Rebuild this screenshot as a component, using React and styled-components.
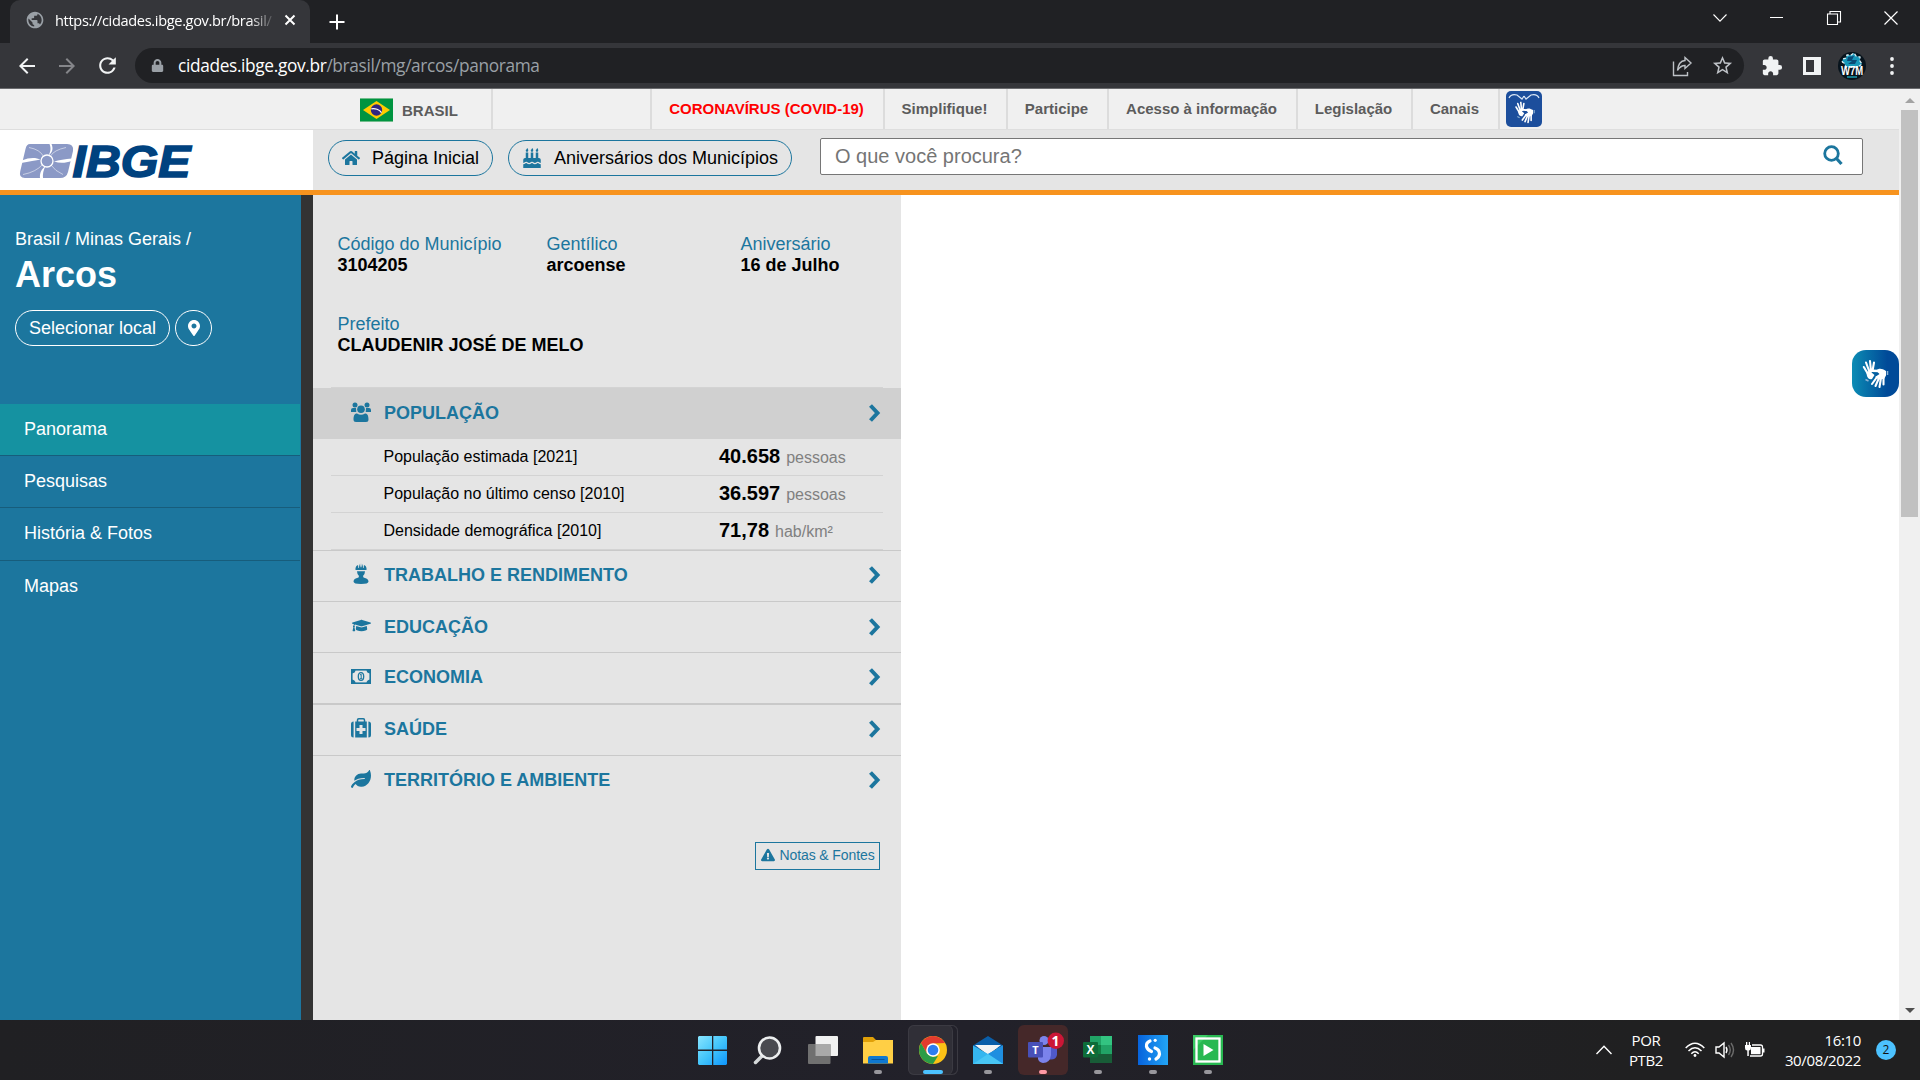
import React from "react";
import styled, { createGlobalStyle, css } from "styled-components";
import {
  FaHome,
  FaBirthdayCake,
  FaGraduationCap,
  FaLeaf,
  FaExclamationTriangle,
  FaMapMarkerAlt,
  FaLock,
} from "react-icons/fa";
import { MdExtension, MdStarBorder, MdRefresh, MdArrowBack, MdArrowForward, MdPublic } from "react-icons/md";

const Global = createGlobalStyle`
  * { box-sizing: border-box; }
  html, body { margin: 0; padding: 0; }
  body { width: 1920px; height: 1080px; overflow: hidden; background: #fff; font-family: "Liberation Sans", Arial, sans-serif; }
  svg { display: block; flex: none; overflow: visible; }
`;

const blue = "#1c769e";
const uiFont = css`font-family: "Open Sans", "Noto Sans", sans-serif;`;

const Screen = styled.div`
  width: 1920px;
  height: 1080px;
  display: flex;
  flex-direction: column;
`;

/* ---------- Browser chrome ---------- */
const TabStrip = styled.div`
  height: 43px;
  background: #202124;
  display: flex;
  justify-content: space-between;
  padding-left: 10px;
  ${uiFont}
`;
const TabGroup = styled.div`
  display: flex;
  align-items: flex-end;
`;
const Tab = styled.div`
  width: 300px;
  height: 43px;
  border-radius: 10px 10px 0 0;
  background: #35363a;
  display: flex;
  align-items: center;
  padding: 0 12px 3px 15px;
  color: #fff;
`;
const TabTitle = styled.div`
  width: 221px;
  margin: 0 8px 0 10px;
  font-size: 14.6px;
  letter-spacing: -0.35px;
  white-space: nowrap;
  mask-image: linear-gradient(90deg, #000 88%, transparent 100%);
`;
const NewTab = styled.div`
  width: 54px;
  height: 43px;
  display: grid;
  place-items: center;
`;
const WindowControls = styled.div`
  display: flex;
  height: 36px;
  padding-right: 1px;
`;
const WindowButton = styled.div`
  width: 57px;
  display: grid;
  place-items: center;
`;
const Toolbar = styled.div`
  height: 46px;
  background: #35363a;
  border-bottom: 1px solid #6a6b6e;
  display: flex;
  align-items: center;
  padding: 0 8px 0 7px;
  ${uiFont}
`;
const ToolButton = styled.div`
  width: 40px;
  height: 36px;
  display: grid;
  place-items: center;
  color: ${(p) => p.$color || "#f1f3f4"};
`;
const AddressBar = styled.div`
  width: 1609px;
  height: 35px;
  margin: 0 8px 0 8px;
  border-radius: 18px;
  background: #202124;
  display: flex;
  align-items: center;
  padding: 0 2px 0 16px;
`;
const Url = styled.div`
  flex: 1;
  margin-left: 14px;
  font-size: 17.3px;
  line-height: 24px;
  letter-spacing: -0.35px;
  white-space: nowrap;
  color: #9aa0a6;
  b { font-weight: 400; color: #fff; }
`;

/* ---------- Page ---------- */
const Viewport = styled.div`
  height: 931px;
  display: flex;
`;
const Page = styled.div`
  position: relative;
  width: 1899px;
  display: flex;
  flex-direction: column;
`;
const GovBar = styled.div`
  height: 41px;
  background: #f0f0f0;
  border-bottom: 1px solid #dedede;
  display: flex;
`;
const GovCell = styled.div`
  width: ${(p) => p.$w}px;
  padding: 0 2px 2px 0;
  border-right: 2px solid #dcdcdc;
  display: flex;
  align-items: center;
  justify-content: center;
  font-weight: 700;
  font-size: 15px;
  color: ${(p) => p.$color || "#5c5c5c"};
  white-space: nowrap;
`;
const Brand = styled(GovCell)`
  justify-content: flex-start;
  padding: 2px 0 0 360px;
  gap: 9px;
`;
const LibrasLink = styled.div`
  padding: 2px 0 0 6px;
`;
const LibrasBox = styled.div`
  width: 36px;
  height: 36px;
  border-radius: 5px;
  background: #1c4e9c;
`;
const Header = styled.header`
  height: 65px;
  border-bottom: 5px solid #f7931e;
  background: #e5e5e5;
  display: flex;
`;
const LogoArea = styled.div`
  width: 313px;
  background: #fff;
  padding: 10px 0 0 16px;
`;
const LogoText = styled.text`
  font-family: "Liberation Sans", Arial, sans-serif;
  font-weight: 700;
  font-style: italic;
  font-size: 45px;
  fill: #00427f;
  stroke: #00427f;
  stroke-width: 1.6px;
`;
const PillButton = styled.div`
  height: 36px;
  width: ${(p) => p.$w}px;
  margin: 10px 0 0 15px;
  border: 1px solid ${blue};
  border-radius: 18px;
  display: flex;
  align-items: center;
  padding-left: 13px;
  gap: 12px;
  font-size: 18px;
  color: #000;
  white-space: nowrap;
  svg { color: ${blue}; }
`;
const SearchBox = styled.div`
  width: 1043px;
  height: 37px;
  margin: 8px 0 0 28px;
  border: 1px solid #767676;
  border-radius: 2px;
  background: #fff;
  display: flex;
  align-items: center;
  justify-content: space-between;
  padding: 0 19px 0 14px;
  font-size: 20px;
  color: #757575;
  svg { margin-bottom: 2px; }
`;
const Body = styled.div`
  flex: 1;
  display: flex;
  background: #fff;
`;
const Sidebar = styled.aside`
  width: 313px;
  background: ${blue};
  border-right: 12px solid #333;
  color: #fff;
  padding-top: 34px;
`;
const Crumb = styled.div`
  padding-left: 15px;
  font-size: 18px;
  line-height: 20px;
`;
const City = styled.h1`
  margin: 6px 0 15px;
  padding-left: 15px;
  font-size: 36px;
  line-height: 40px;
  font-weight: 700;
`;
const PlaceActions = styled.div`
  display: flex;
  gap: 5px;
  padding-left: 15px;
  margin-bottom: 58px;
`;
const PlaceButton = styled.div`
  width: ${(p) => p.$w}px;
  height: 36px;
  border: 1px solid #fff;
  border-radius: 18px;
  display: grid;
  place-items: center;
  font-size: 18px;
`;
const MenuItem = styled.div`
  width: 300px;
  height: ${(p) => p.$h || 52}px;
  padding: 0 0 ${(p) => (p.$h ? 2 : 0)}px 24px;
  display: flex;
  align-items: center;
  font-size: 18px;
  background: ${(p) => (p.$active ? "#1592a1" : "transparent")};
  border-bottom: ${(p) => (p.$last ? "1px solid transparent" : "1px solid #175d7c")};
`;
const Panel = styled.section`
  width: 588px;
  background: #e5e5e5;
  padding-top: 39px;
`;
const Facts = styled.div`
  display: grid;
  grid-template-columns: 209px 194px 1fr;
  row-gap: 38px;
  padding: 0 0 31px 24.500px;
`;
const Fact = styled.div`
  grid-column: ${(p) => (p.$wide ? "1 / -1" : "auto")};
  font-size: 18px;
  line-height: 21px;
  color: ${blue};
  strong { display: block; color: #000; }
`;
const PanelRule = styled.div`
  height: 1px;
  margin: 0 18px;
  background: #d3d3d3;
`;
const SectionRow = styled.div`
  height: ${(p) => p.$h || 51}px;
  background: ${(p) => (p.$open ? "#d0d0d0" : "transparent")};
  border-top: ${(p) => (p.$open ? 0 : p.$border || 1)}px solid #c9c9c9;
  padding: 0 20px ${(p) => p.$lift || 0}px 38px;
  display: flex;
  align-items: center;
  font-size: 18px;
  font-weight: 700;
  color: ${blue};
`;
const SectionIcon = styled.div`
  width: 20px;
  height: 24px;
  margin: 0 13px 3px 0;
  display: grid;
  place-items: center;
`;
const SectionTitle = styled.div`
  flex: 1;
`;
const SectionArrow = styled.svg`
  margin-bottom: 1px;
`;
const DataRow = styled.div`
  height: 37px;
  margin: 0 18px;
  padding-left: 52.500px;
  border-bottom: 1px solid #d3d3d3;
  display: flex;
  font-size: 16px;
  line-height: 36px;
  color: #000;
`;
const DataLabel = styled.div`
  width: 335.500px;
`;
const DataValue = styled.div`
  margin-top: -1px;
  font-size: 20px;
  font-weight: 700;
  span { font-size: 16px; font-weight: 400; color: #808080; margin-left: 6px; }
`;
const NotesButton = styled.div`
  width: 125px;
  height: 28px;
  margin: 36px 0 0 442px;
  border: 1px solid ${blue};
  display: flex;
  align-items: center;
  justify-content: center;
  gap: 4px;
  padding: 0 0 2px 1px;
  font-size: 14px;
  letter-spacing: -0.1px;
  color: ${blue};
`;
const FloatingLibras = styled.div`
  position: absolute;
  right: 0;
  top: 261px;
  width: 47px;
  height: 47px;
  border-radius: 14px;
  background: linear-gradient(90deg, #0c8cb4, #004a98 75%);
`;
const Scrollbar = styled.div`
  width: 21px;
  background: #f0f0f0;
  display: flex;
  flex-direction: column;
  align-items: center;
`;
const ScrollArrow = styled.div`
  height: 21px;
  padding-top: 2px;
  display: grid;
  place-items: center;
`;
const ScrollTrack = styled.div`
  flex: 1;
`;
const ScrollThumb = styled.div`
  width: 17px;
  height: 407px;
  background: #c1c1c1;
`;

/* ---------- Taskbar ---------- */
const Taskbar = styled.footer`
  height: 60px;
  background: linear-gradient(90deg, #202023, #22212a 50%, #202021 85%);
  display: flex;
  justify-content: space-between;
  padding: 5px 24px 5px 688px;
  color: #fff;
  ${uiFont}
`;
const AppList = styled.div`
  display: flex;
  gap: 5px;
`;
const AppSlot = styled.div`
  width: 50px;
  height: 50px;
  border-radius: 6px;
  background: ${(p) => p.$bg || "transparent"};
  box-shadow: ${(p) => (p.$stacked ? "inset 0 0 0 1px #3b3a42, -5px 0 0 0 #22212a inset, -6px 0 0 0 #3b3a42 inset" : "none")};
  display: flex;
  flex-direction: column;
  align-items: center;
  padding-top: 10px;
`;
const Indicator = styled.div`
  width: ${(p) => p.$w || 8}px;
  height: 4px;
  margin-top: 5px;
  border-radius: 2px;
  background: ${(p) => p.$color || "#98979c"};
`;
const Tray = styled.div`
  display: flex;
  align-items: center;
`;
const TrayText = styled.div`
  width: ${(p) => p.$w}px;
  font-size: 15px;
  line-height: 20px;
  letter-spacing: -0.35px;
  text-align: ${(p) => p.$align || "center"};
  white-space: nowrap;
`;
const TrayIcon = styled.div`
  width: 30px;
  display: grid;
  place-items: center;
`;
const NoticeBadge = styled.div`
  width: 20px;
  height: 20px;
  margin-left: 15px;
  border-radius: 50%;
  background: #4cc2ff;
  color: #111;
  font-size: 12px;
  line-height: 20px;
  text-align: center;
`;
const AppGlyph = styled.text`
  font-family: "Open Sans", sans-serif;
  font-weight: 700;
  fill: #fff;
  text-anchor: middle;
`;

/* ---------- Drawings ---------- */
const Hands = ({ size = 47, ...rest }) => (
  <svg width={size} height={size} viewBox="0 0 47 47" {...rest}>
    <g stroke="#fff" strokeLinecap="round" strokeWidth="2.1" fill="none">
      <path d="M16 24 11.8 17M17.500 22 14 12.500M19 21 18 11M20.500 21 22 12.500" />
      <path d="M25 27 20 34M27 28 23.500 36M29 28 27.500 37M31.500 27 31.500 34.500" />
      <path d="M27 21 20.500 20.800" strokeWidth="2.400" />
    </g>
    <path d="M14.500 22 21.500 19.500 19.500 22.500 22.500 25 20 29C16.500 30 14.500 27 14.500 22Z" fill="#fff" />
    <path d="M24 20.500C27 18 30 18.500 34 21V25.500L32 29H26L23 27 27.500 24Z" fill="#fff" />
    <path d="M35.500 21v4M13.500 29.500l3 1.500" stroke="#8eb4d5" strokeWidth="1.500" />
  </svg>
);

const Flag = () => (
  <svg width="33" height="24" viewBox="0 0 33 24">
    <rect width="33" height="24" fill="#009440" />
    <path d="M0 .5H33M0 23.500H33" stroke="#72bd8c" />
    <path d="M3 12 16.500 3 30 12 16.500 21Z" fill="#ffcb00" />
    <circle cx="16.500" cy="12" r="5.700" fill="#302681" />
    <path d="M11.300 10.800C15 10 19.500 11.500 21.500 14.600" stroke="#fff" strokeWidth="1.300" fill="none" />
  </svg>
);

const Logo = () => (
  <svg width="190" height="42" viewBox="0 0 190 42">
    <g transform="translate(4 4)">
      <path d="M10 0H47Q54 0 53 7L48 28Q46.500 34 40 34H5Q-1.500 34 .3 27L5.500 5Q6.500 0 10 0Z" fill="#8b99c6" />
      <path d="M1.500 16.500C10 13 16 13.500 20.500 15.500 16 16.500 9 17.500 1 19Z" fill="#fff" />
      <path d="M31.500 0C33.500 5 32.500 8 28.500 11.500 31 7 31 4 29.500 0Z" fill="#fff" />
      <path d="M52 14.500C45 15 39 16 34 17.500 40 19.500 46 19 51.500 17Z" fill="#fff" />
      <path d="M20 34C19.500 29 21.500 25 25.500 22 23.500 26 22.500 30 23 34Z" fill="#fff" />
      <path d="M9 3.500Q20 5.500 23.500 12.500M46 3.500Q34 6 30.500 12M3 30.500Q16 28 22.500 20.500M43 30.500Q35 27 31 21" stroke="#fff" strokeWidth=".8" strokeOpacity=".65" fill="none" />
      <circle cx="27" cy="17" r="6" fill="#8b99c6" stroke="#fff" strokeWidth="1.300" />
    </g>
    <LogoText x="56.500" y="37" textLength="118" lengthAdjust="spacingAndGlyphs">IBGE</LogoText>
  </svg>
);

const Chevron = () => (
  <SectionArrow width="13" height="20" viewBox="0 0 13 20">
    <path d="M2.500 2.500 9.500 10 2.500 17.500" fill="none" stroke={blue} strokeWidth="4" />
  </SectionArrow>
);

const PeopleIcon = () => (
  <svg width="20" height="20" viewBox="0 0 20 20" fill={blue}>
    <circle cx="4" cy="3" r="2.500" />
    <circle cx="16" cy="3" r="2.500" />
    <path d="M0 10V8Q0 6 2 6H5L5.300 10ZM20 10V8Q20 6 18 6H15L14.700 10Z" />
    <circle cx="10" cy="7.300" r="3.800" />
    <path d="M2.500 17.500C2.500 13 4 11.500 6 11.500Q10 14 14 11.500C16 11.500 17.500 13 17.500 17.500Q17.500 20 15 20H5Q2.500 20 2.500 17.500Z" />
  </svg>
);

const WorkerIcon = () => (
  <svg width="16" height="21" viewBox="0 0 16 21" fill={blue}>
    <path d="M2.500 7V5Q3 2.500 5 2L5.400 5H6L6.300.8 7.500 4.800 8 0 8.500 4.800 9.700.8 10 5H10.600L11 2Q13 2.500 13.500 5V7Z" />
    <path d="M4 8.200H12Q12 11 10 13L10.500 14.500Q15.500 15.500 15.500 18.500 15.500 21 8 21T.5 18.500Q.5 15.500 5.500 14.500L6 13Q4 11 4 8.200Z" />
  </svg>
);

const MoneyIcon = () => (
  <svg width="20" height="15" viewBox="0 0 20 15">
    <rect x=".8" y=".8" width="18.400" height="13.400" fill="none" stroke={blue} strokeWidth="1.600" />
    <path d="M1 1H4.500Q4.500 4 1 4.500ZM19 1H15.500Q15.500 4 19 4.500ZM1 14H4.500Q4.500 11 1 10.500ZM19 14H15.500Q15.500 11 19 10.500Z" fill={blue} />
    <ellipse cx="10" cy="7.500" rx="2.700" ry="3.900" fill="none" stroke={blue} strokeWidth="1.300" />
    <path d="M9 6 10.200 5.200V9.500M8.900 9.700H11.400" stroke={blue} strokeWidth="1" fill="none" />
  </svg>
);

const MedIcon = () => (
  <svg width="20" height="20" viewBox="0 0 20 20">
    <path d="M6.500 4V2Q6.500.8 7.700.8H12.300Q13.500.8 13.500 2V4" fill="none" stroke={blue} strokeWidth="1.500" />
    <path d="M4.200 3.500H15.800V19.500H4.200ZM2.600 3.500V19.500Q0 19.500 0 17V6Q0 3.500 2.600 3.500ZM17.400 3.500Q20 3.500 20 6V17Q20 19.500 17.400 19.500Z" fill={blue} />
    <path d="M10 7V16M5.500 11.500H14.500" stroke="#e5e5e5" strokeWidth="3" />
  </svg>
);

const Stroke = ({ w = 16, h = 16, d, sw = 1.3, color = "#fff" }) => (
  <svg width={w} height={h} viewBox={`0 0 ${w} ${h}`} fill="none" stroke={color} strokeWidth={sw}>
    <path d={d} />
  </svg>
);

const ShareIcon = () => (
  <svg width="20" height="22" viewBox="0 0 20 22" fill="none" stroke="#bdc1c6" strokeWidth="1.400">
    <path d="M1.500 6.500V20.500H15.500V17" />
    <path d="M13 2.500 19 8 13 13.500V10.500Q8.500 10.500 5.500 15.500 6.500 6 13 5.500Z" />
  </svg>
);

const Avatar = () => (
  <svg width="28" height="28" viewBox="0 0 28 28">
    <circle cx="14" cy="14" r="14" fill="#07131c" />
    <path d="M6 11Q3 10 5 7L8 6 9 3 13 3 16 1 18 4 22 5 22 9 24 12 20 15H8Z" fill="#1797b9" stroke="#d9edf2" strokeWidth="1.300" strokeDasharray="3 2" />
    <path d="M10 5 16 4 14 8 19 8 17 12H10L14 9H9Z" fill="#0b4a76" />
    <text x="14" y="23" textAnchor="middle" fontFamily="Liberation Sans" fontWeight="700" fontSize="12.500" textLength="22" lengthAdjust="spacingAndGlyphs" fill="#fff">W7M</text>
    <path d="M9 25H19" stroke="#1b9eb0" strokeWidth="1.500" />
  </svg>
);

const WindowsIcon = () => (
  <svg width="30" height="30" viewBox="0 0 30 30">
    <defs>
      <linearGradient id="win" gradientUnits="userSpaceOnUse" x1="0" y1="0" x2="30" y2="30">
        <stop stopColor="#8be6ff" />
        <stop offset=".5" stopColor="#43c5fb" />
        <stop offset="1" stopColor="#0c93fb" />
      </linearGradient>
    </defs>
    <path d="M1 1H14V14.500H0V2ZM15.300 1H28L29 2V14.500H15.300ZM0 16H14V30H1L0 29ZM15.300 16H29V29L28 30H15.300Z" fill="url(#win)" />
  </svg>
);
const SearchApp = () => (
  <svg width="30" height="30" viewBox="0 0 30 30">
    <path d="M9 21 2.500 27.500" stroke="#d5d8da" strokeWidth="3.500" strokeLinecap="round" />
    <circle cx="16.500" cy="13" r="10.500" fill="#494a50" stroke="#eceeef" strokeWidth="2.600" />
  </svg>
);
const TaskView = () => (
  <svg width="30" height="30" viewBox="0 0 30 30">
    <rect x="7.500" y="1" width="22.500" height="20" rx="1" fill="#f1f1f1" />
    <rect x="0" y="9" width="22.500" height="20" rx="1" fill="#707070" />
    <path d="M7.500 9H22.500V21H7.500Z" fill="#a9a9a9" />
  </svg>
);
const Folder = () => (
  <svg width="30" height="30" viewBox="0 0 30 30">
    <path d="M0 3Q0 2 1 2H10L13 5H18V10H0Z" fill="#e0a008" />
    <path d="M0 7H10L13 5H30V28.500H0Z" fill="#ffcf45" />
    <path d="M5 28.500V23Q5 21 7 21H23Q25 21 25 23V28.500Z" fill="#0f78d0" />
    <path d="M8.500 24.500H21.500" stroke="#07549c" />
  </svg>
);
const Chrome = () => (
  <svg width="30" height="30" viewBox="0 0 30 30">
    <circle cx="15" cy="15" r="14" fill="#fbc116" />
    <path d="M2.900 8A14 14 0 0 1 27.100 8L15 8.500 9 18.500Z" fill="#e33b2e" />
    <path d="M2.900 8 9 18.500 15 22 20 21 15 29A14 14 0 0 1 2.900 8Z" fill="#2b9c47" />
    <circle cx="15" cy="15" r="6.800" fill="#fff" />
    <circle cx="15" cy="15" r="5.300" fill="#2d7df0" />
  </svg>
);
const Mail = () => (
  <svg width="30" height="30" viewBox="0 0 30 30">
    <path d="M0 10.500 15 1 30 10.500V14H0Z" fill="#0a5ea8" />
    <path d="M2 10H28L15 20Z" fill="#f4f4f4" />
    <path d="M0 10.500 15 19 30 10.500V29H0Z" fill="#35b6ef" />
    <path d="M15 19 30 10.500V29Z" fill="#1f8fe0" />
    <path d="M15 19 0 29H30Z" fill="#48c6f5" />
  </svg>
);
const Teams = () => (
  <svg width="30" height="30" viewBox="0 0 30 30">
    <circle cx="16" cy="5.500" r="4.500" fill="#7b83eb" />
    <path d="M19 12H29V20Q28 24.500 23 24.500H19Z" fill="#4f59ca" />
    <path d="M10 12H23V20Q22 28 15 28 11 27.500 10 24Z" fill="#7b83eb" />
    <rect x="0" y="7" width="15" height="15.500" rx="1" fill="#4850b8" />
    <AppGlyph x="7.500" y="18.500" fontSize="11">T</AppGlyph>
    <circle cx="27.800" cy="5.800" r="8.200" fill="#cc1636" />
    <AppGlyph x="27.500" y="11" fontSize="14">1</AppGlyph>
  </svg>
);
const Excel = () => (
  <svg width="30" height="30" viewBox="0 0 30 30">
    <path d="M7 1H18V10H7Z" fill="#21a366" />
    <path d="M18 1H29V10H18Z" fill="#33c481" />
    <path d="M7 10H18V19H7Z" fill="#107c41" />
    <path d="M18 10H29V19H18Z" fill="#21a366" />
    <path d="M7 19H29V28H7Z" fill="#185c37" />
    <rect y="7" width="15" height="15.500" rx="1" fill="#0e6c39" />
    <AppGlyph x="7.500" y="18.800" fontSize="12">X</AppGlyph>
  </svg>
);
const SApp = () => (
  <svg width="30" height="30" viewBox="0 0 30 30">
    <defs>
      <linearGradient id="sapp">
        <stop stopColor="#0763dc" />
        <stop offset="1" stopColor="#22a5f5" />
      </linearGradient>
    </defs>
    <rect width="30" height="30" fill="url(#sapp)" />
    <path d="M12 6Q8 7.500 8.500 11.500 9.500 15 13.500 16.500M17 13Q21.500 14.500 21.500 19 21 22.500 18 24" stroke="#fff" strokeWidth="3.200" fill="none" strokeLinecap="round" />
    <circle cx="17.200" cy="5.300" r="1.600" fill="#fff" />
    <circle cx="11.500" cy="24" r="1.700" fill="#fff" />
  </svg>
);
const PlayApp = () => (
  <svg width="30" height="30" viewBox="0 0 30 30">
    <rect width="30" height="30" fill="#28b851" />
    <path d="M0 0H15L0 15Z" fill="#3acb64" />
    <rect x="3.500" y="3.500" width="23" height="23" fill="none" stroke="#fff" strokeWidth="2.300" />
    <path d="M10.500 9 20.500 15 10.500 21Z" fill="#fff" />
  </svg>
);

const Wifi = () => (
  <svg width="20" height="16" viewBox="0 0 20 16" fill="none" stroke="#fff" strokeWidth="1.500">
    <path d="M.7 6Q10-3.500 19.300 6M3.500 9Q10 2.500 16.500 9M6.300 11.700Q10 8 13.700 11.700" />
    <circle cx="10" cy="13.500" r="1.400" fill="#fff" stroke="none" />
  </svg>
);
const Sound = () => (
  <svg width="20" height="18" viewBox="0 0 20 18" fill="none" strokeWidth="1.400">
    <path d="M1 6H4L9 2V16L4 12H1Z" stroke="#fff" />
    <path d="M11 6Q13 9 11 12" stroke="#fff" />
    <path d="M13.500 4Q17 9 13.500 14M16 2Q21 9 16 16" stroke="#6b6b6b" />
  </svg>
);
const Battery = () => (
  <svg width="20" height="18" viewBox="0 0 20 18">
    <path d="M7 4H15.500Q17.500 4 17.500 6V13Q17.500 15 15.500 15H5" fill="none" stroke="#fff" strokeWidth="1.300" />
    <rect x="6" y="6" width="9.500" height="7.200" fill="#fff" />
    <path d="M18 7.500H19.500V11.500H18ZM0 4H6V7Q6 9.500 3.800 9.500V15H2.300V9.500Q0 9.500 0 7ZM1 1H2.300V4H1ZM3.800 1H5V4H3.800Z" fill="#fff" />
  </svg>
);

const govLinks = [
  { text: "", w: 159 },
  { text: "CORONAVÍRUS (COVID-19)", w: 233, color: "#ff0000" },
  { text: "Simplifique!", w: 123 },
  { text: "Participe", w: 101 },
  { text: "Acesso à informação", w: 189 },
  { text: "Legislação", w: 115 },
  { text: "Canais", w: 87 },
];

const figures = [
  ["População estimada [2021]", "40.658", "pessoas"],
  ["População no último censo [2010]", "36.597", "pessoas"],
  ["Densidade demográfica [2010]", "71,78", "hab/km²"],
];

const sections = [
  { title: "TRABALHO E RENDIMENTO", icon: <WorkerIcon />, lift: 2 },
  { title: "EDUCAÇÃO", icon: <FaGraduationCap size={19} /> },
  { title: "ECONOMIA", icon: <MoneyIcon />, lift: 1 },
  { title: "SAÚDE", icon: <MedIcon />, h: 52, border: 2, lift: 1 },
  { title: "TERRITÓRIO E AMBIENTE", icon: <FaLeaf size={20} />, lift: 1 },
];

const apps = [
  { icon: <WindowsIcon /> },
  { icon: <SearchApp /> },
  { icon: <TaskView /> },
  { icon: <Folder />, running: true },
  { icon: <Chrome />, running: true, bg: "#302f37", stacked: true, w: 20, color: "#4cc2ff" },
  { icon: <Mail />, running: true },
  { icon: <Teams />, running: true, bg: "#452829", color: "#ff99a4" },
  { icon: <Excel />, running: true },
  { icon: <SApp />, running: true },
  { icon: <PlayApp />, running: true },
];

export default function App() {
  return (
    <Screen>
      <Global />
      <TabStrip>
        <TabGroup>
          <Tab>
            <MdPublic size={20} color="#9aa0a6" />
            <TabTitle>https://cidades.ibge.gov.br/brasil/</TabTitle>
            <Stroke w={12} h={12} sw={2} d="M1.500 1.500 10.500 10.500M10.500 1.500 1.500 10.500" />
          </Tab>
          <NewTab>
            <Stroke w={16} h={16} sw={2} d="M8 .5V15.500M.5 8H15.500" />
          </NewTab>
        </TabGroup>
        <WindowControls>
          <WindowButton><Stroke w={14} h={8} sw={1.1} d="M.5.500 7 7.200 13.500.500" /></WindowButton>
          <WindowButton><Stroke w={13} h={2} sw={1} d="M0 .5H13" /></WindowButton>
          <WindowButton><Stroke w={14} h={14} sw={1.1} d="M.5 3H10.500V13.500H.5ZM3 3V.5H13.500V11H10.500" /></WindowButton>
          <WindowButton><Stroke w={14} h={14} sw={1.2} d="M.5.500 13.500 13.500M13.500.500.500 13.500" /></WindowButton>
        </WindowControls>
      </TabStrip>
      <Toolbar>
        <ToolButton><MdArrowBack size={24} /></ToolButton>
        <ToolButton $color="#85868a"><MdArrowForward size={24} /></ToolButton>
        <ToolButton><MdRefresh size={25} /></ToolButton>
        <AddressBar>
          <FaLock size={13} color="#9aa0a6" />
          <Url><b>cidades.ibge.gov.br</b>/brasil/mg/arcos/panorama</Url>
          <ToolButton><ShareIcon /></ToolButton>
          <ToolButton $color="#bdc1c6"><MdStarBorder size={23} /></ToolButton>
        </AddressBar>
        <ToolButton><MdExtension size={22} /></ToolButton>
        <ToolButton>
          <svg width="18" height="18" viewBox="0 0 18 18">
            <rect width="18" height="18" fill="#f1f3f4" />
            <rect x="3" y="3" width="8" height="12" fill="#35363a" />
          </svg>
        </ToolButton>
        <ToolButton><Avatar /></ToolButton>
        <ToolButton>
          <svg width="4" height="18" viewBox="0 0 4 18" fill="#f1f3f4">
            <circle cx="2" cy="2" r="1.900" />
            <circle cx="2" cy="9" r="1.900" />
            <circle cx="2" cy="16" r="1.900" />
          </svg>
        </ToolButton>
      </Toolbar>

      <Viewport>
        <Page>
          <GovBar>
            <Brand $w={493}><Flag />BRASIL</Brand>
            {govLinks.map((l, i) => (
              <GovCell key={i} $w={l.w} $color={l.color}>{l.text}</GovCell>
            ))}
            <LibrasLink>
              <LibrasBox>
                <svg width="36" height="36" viewBox="0 0 36 36">
                  <path d="M3 7Q5 2.500 11 4L16 8 18 5M33 7Q31 2.500 25 4L20 8 18 5" fill="none" stroke="#dbe7f6" strokeWidth="1.200" />
                  <Hands size={36} x="1" y="3" />
                </svg>
              </LibrasBox>
            </LibrasLink>
          </GovBar>
          <Header>
            <LogoArea><Logo /></LogoArea>
            <PillButton $w={165}><FaHome size={18} />Página Inicial</PillButton>
            <PillButton $w={284}><FaBirthdayCake size={20} />Aniversários dos Municípios</PillButton>
            <SearchBox>
              O que você procura?
              <svg width="20" height="21" viewBox="0 0 20 21" fill="none" stroke={blue}>
                <circle cx="8.500" cy="8.500" r="6.800" strokeWidth="2.800" />
                <path d="M13.500 13.500 18.500 19" strokeWidth="3.200" />
              </svg>
            </SearchBox>
          </Header>
          <Body>
            <Sidebar>
              <Crumb>Brasil / Minas Gerais /</Crumb>
              <City>Arcos</City>
              <PlaceActions>
                <PlaceButton $w={155}>Selecionar local</PlaceButton>
                <PlaceButton $w={37}><FaMapMarkerAlt size={16} /></PlaceButton>
              </PlaceActions>
              <MenuItem $active>Panorama</MenuItem>
              <MenuItem>Pesquisas</MenuItem>
              <MenuItem $h={53}>História &amp; Fotos</MenuItem>
              <MenuItem $last>Mapas</MenuItem>
            </Sidebar>
            <Panel>
              <Facts>
                <Fact>Código do Município<strong>3104205</strong></Fact>
                <Fact>Gentílico<strong>arcoense</strong></Fact>
                <Fact>Aniversário<strong>16 de Julho</strong></Fact>
                <Fact $wide>Prefeito<strong>CLAUDENIR JOSÉ DE MELO</strong></Fact>
              </Facts>
              <PanelRule />
              <SectionRow $open>
                <SectionIcon><PeopleIcon /></SectionIcon>
                <SectionTitle>POPULAÇÃO</SectionTitle>
                <Chevron />
              </SectionRow>
              {figures.map(([label, value, unit]) => (
                <DataRow key={label}>
                  <DataLabel>{label}</DataLabel>
                  <DataValue>{value}<span>{unit}</span></DataValue>
                </DataRow>
              ))}
              {sections.map((s) => (
                <SectionRow key={s.title} $h={s.h} $border={s.border} $lift={s.lift}>
                  <SectionIcon>{s.icon}</SectionIcon>
                  <SectionTitle>{s.title}</SectionTitle>
                  <Chevron />
                </SectionRow>
              ))}
              <NotesButton><FaExclamationTriangle size={14} />Notas &amp; Fontes</NotesButton>
            </Panel>
          </Body>
          <FloatingLibras><Hands /></FloatingLibras>
        </Page>
        <Scrollbar>
          <ScrollArrow><svg width="10" height="5" viewBox="0 0 10 5"><path d="M0 5 5 0 10 5Z" fill="#a3a3a3" /></svg></ScrollArrow>
          <ScrollTrack><ScrollThumb /></ScrollTrack>
          <ScrollArrow><svg width="10" height="5" viewBox="0 0 10 5"><path d="M0 0H10L5 5Z" fill="#505050" /></svg></ScrollArrow>
        </Scrollbar>
      </Viewport>

      <Taskbar>
        <AppList>
          {apps.map((a, i) => (
            <AppSlot key={i} $bg={a.bg} $stacked={a.stacked}>
              {a.icon}
              {a.running && <Indicator $w={a.w} $color={a.color} />}
            </AppSlot>
          ))}
        </AppList>
        <Tray>
          <Stroke w={16} h={10} sw={1.4} d="M.5 9 8 1.200 15.500 9" />
          <TrayText $w={68}>POR<br />PTB2</TrayText>
          <TrayIcon><Wifi /></TrayIcon>
          <TrayIcon><Sound /></TrayIcon>
          <TrayIcon><Battery /></TrayIcon>
          <TrayText $w={91} $align="right">16:10<br />30/08/2022</TrayText>
          <NoticeBadge>2</NoticeBadge>
        </Tray>
      </Taskbar>
    </Screen>
  );
}
